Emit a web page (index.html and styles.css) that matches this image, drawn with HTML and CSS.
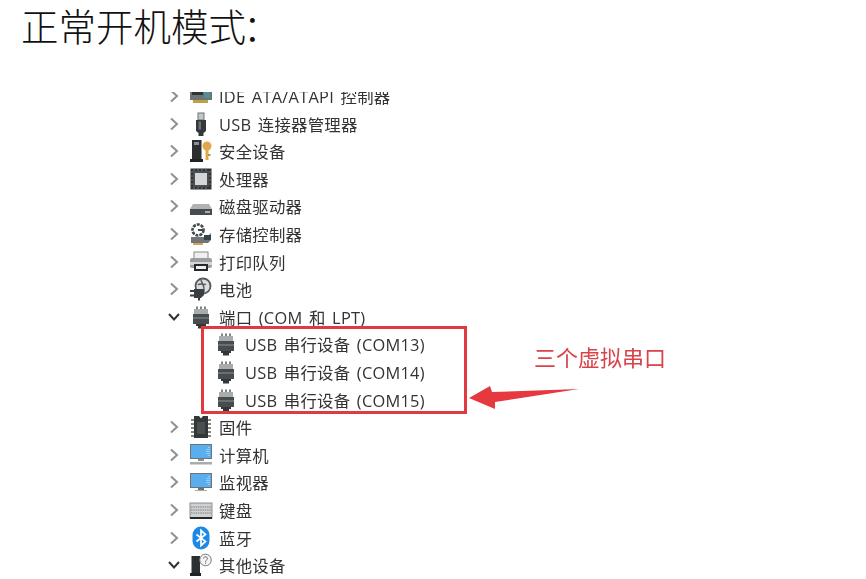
FILE: index.html
```html
<!DOCTYPE html>
<html lang="zh-CN">
<head>
<meta charset="utf-8">
<title>正常开机模式</title>
<link rel="stylesheet" href="styles.css">
</head>
<body>
<svg class="defs" width="0" height="0" aria-hidden="true">
  <symbol id="chev-r" viewBox="0 0 10 14"><path d="M2 1.500 8 7l-6 5.500" fill="none" stroke="#8f8f8f" stroke-width="2"/></symbol>
  <symbol id="chev-d" viewBox="0 0 14 10"><path d="M2 2 7 7.500 12 2" fill="none" stroke="#333" stroke-width="2"/></symbol>
  <symbol id="i-ide" viewBox="0 0 24 24"><rect x="1" y="2" width="22" height="14" fill="#6f7376"/><rect x="3" y="4" width="11" height="7" fill="#2f3437"/><rect x="15" y="5" width="6" height="9" fill="#4f8f96"/><rect x="4" y="16" width="15" height="3" fill="#b8a24a"/></symbol>
  <symbol id="i-usb" viewBox="0 0 24 24"><rect x="9" y="1" width="6" height="7" fill="#c4c6c8" stroke="#6d7072"/><path d="M7 8h10v11l-2.500 2v3h-5v-3L7 19z" fill="#34383b"/><rect x="9.500" y="9.500" width="2.500" height="8" fill="#6b7073"/></symbol>
  <symbol id="i-sec" viewBox="0 0 24 24"><rect x="3" y="1" width="9.500" height="19" fill="#2b2f32"/><rect x="5" y="3" width="5" height="3" fill="#8b8f93"/><rect x="1" y="20" width="13" height="3" fill="#222"/><circle cx="18" cy="7" r="4.500" fill="#dfa94a"/><rect x="16.500" y="10" width="3" height="11" fill="#dfa94a"/><rect x="19" y="15" width="2.500" height="2" fill="#c98f30"/></symbol>
  <symbol id="i-cpu" viewBox="0 0 24 24"><rect x="1.500" y="1.500" width="21" height="21" fill="#2f3336"/><path d="M1.500 5h21M1.500 9h21M1.500 13h21M1.500 17h21M5 1.500v21M9 1.500v21M13 1.500v21M17 1.500v21" stroke="#85898b" stroke-width=".8"/><rect x="4" y="4" width="16" height="16" fill="#4a4e51"/><rect x="6" y="6" width="12" height="12" fill="#d4d6d7"/></symbol>
  <symbol id="i-disk" viewBox="0 0 24 24"><path d="M4 10h16l3 5v5H1v-5z" fill="#b0b2b4"/><rect x="1" y="15" width="22" height="6" fill="#484c4f"/><rect x="16" y="17" width="5" height="2" fill="#a9adaf"/></symbol>
  <symbol id="i-sto" viewBox="0 0 24 24"><circle cx="9" cy="8" r="5.500" fill="none" stroke="#44494c" stroke-width="2.600" stroke-dasharray="3 1"/><path d="M9 8h5" stroke="#44494c" stroke-width="2"/><path d="M2 15h16l4-4v7l-3 3H2z" fill="#6f7578"/><rect x="15" y="13" width="7" height="5" fill="#34444d"/><rect x="4" y="21" width="10" height="2" fill="#d8a24a"/></symbol>
  <symbol id="i-pri" viewBox="0 0 24 24"><rect x="5" y="2" width="14" height="7" fill="#f0f0f0" stroke="#8a8a8a"/><rect x="1" y="8" width="22" height="10" rx="2" fill="#9a9ea0"/><rect x="1" y="12" width="22" height="3" fill="#d4d6d7"/><rect x="5" y="14" width="14" height="7" fill="#26292c"/><rect x="7" y="16" width="10" height="3" fill="#eee"/></symbol>
  <symbol id="i-bat" viewBox="0 0 24 24"><circle cx="14" cy="9" r="7.500" fill="#dcdddf" stroke="#55595c" stroke-width="1.800"/><path d="M9 8c3-3 5 1 8-1M12 3c1 4 4 5 3 12" stroke="#55595c" stroke-width="1.500" fill="none"/><path d="M5 12h10v6l-3 3H5z" fill="#3a3e41"/><path d="M1 14h4M1 18.500h4M10 21v2.500" stroke="#3a3e41" stroke-width="2"/></symbol>
  <symbol id="i-port" viewBox="0 0 24 24"><path d="M7 1.500h2v3H7zM11 1.500h2v3h-2zM15 1.500h2v3h-2z" fill="#7f8385"/><rect x="5" y="4" width="14" height="5" fill="#a9acae"/><rect x="4" y="9" width="16" height="10" fill="#474c4f"/><path d="M4 13h16" stroke="#8c9092"/><path d="M7 19h10v2h-2v2.500H9V21H7z" fill="#33373a"/></symbol>
  <symbol id="i-fw" viewBox="0 0 24 24"><path d="M5 1h5l2 2.500L14 1h5v22H5z" fill="#33373a"/><path d="M2 5h3M2 9h3M2 13h3M2 17h3M2 21h3M19 5h3M19 9h3M19 13h3M19 17h3M19 21h3" stroke="#85887a" stroke-width="1.800"/><rect x="8" y="7" width="8" height="12" fill="#4a4e51"/></symbol>
  <symbol id="i-pc" viewBox="0 0 24 24"><rect x="1" y="1" width="22" height="15" fill="#6f7577"/><rect x="2" y="2" width="20" height="13" fill="#58aeee"/><path d="M20 4v9M18 6v6" stroke="#d8eefc" stroke-width="1" stroke-dasharray="1 1"/><rect x="9" y="16" width="6" height="2" fill="#8a9093"/><rect x="1" y="19" width="22" height="2.500" fill="#a9acae"/></symbol>
  <symbol id="i-mon" viewBox="0 0 24 24"><rect x="1" y="3" width="22" height="15" fill="#6f7577"/><rect x="2" y="4" width="20" height="13" fill="#58aeee"/><path d="M20 6v9M18 8v6" stroke="#d8eefc" stroke-width="1" stroke-dasharray="1 1"/><rect x="9" y="18" width="6" height="2" fill="#6f7577"/><rect x="6" y="20" width="12" height="1" fill="#a9acae"/></symbol>
  <symbol id="i-key" viewBox="0 0 24 24"><rect x="1" y="5" width="22" height="15" fill="#cfd1d2" stroke="#8a8d8f"/><path d="M2 9h20M2 12h20M2 15h20" stroke="#7d8082" stroke-dasharray="1.500 .8"/><rect x="1" y="19" width="22" height="2" fill="#26292c"/></symbol>
  <symbol id="i-bt" viewBox="0 0 24 24"><rect x="3.500" y="0.500" width="17" height="23" rx="8.500" fill="#1e88e5"/><path d="M7.500 8.500l9 7-4.500 4V4.500l4.500 4-9 7" fill="none" stroke="#fff" stroke-width="1.700"/></symbol>
  <symbol id="i-oth" viewBox="0 0 24 24"><rect x="2.500" y="3" width="8.500" height="17" fill="#2b2f32"/><rect x="1" y="20" width="11" height="3" fill="#222"/><circle cx="16.500" cy="7" r="5.800" fill="#f4f4f4" stroke="#777"/><path d="M14.500 5.500c0-2.200 4-2.200 4 0 0 1.500-2 1.500-2 3.200M16.500 9.500v1.200" fill="none" stroke="#666"/></symbol>
</svg>

<h1 class="title">正常开机模式<span class="colon">：</span></h1>

<main class="tree-view">
  <ul class="tree">
    <li class="row"><svg class="chev"><use href="#chev-r"/></svg><svg class="icon"><use href="#i-ide"/></svg><span class="label">IDE ATA/ATAPI 控制器</span></li>
    <li class="row"><svg class="chev"><use href="#chev-r"/></svg><svg class="icon"><use href="#i-usb"/></svg><span class="label">USB 连接器管理器</span></li>
    <li class="row"><svg class="chev"><use href="#chev-r"/></svg><svg class="icon"><use href="#i-sec"/></svg><span class="label">安全设备</span></li>
    <li class="row"><svg class="chev"><use href="#chev-r"/></svg><svg class="icon"><use href="#i-cpu"/></svg><span class="label">处理器</span></li>
    <li class="row"><svg class="chev"><use href="#chev-r"/></svg><svg class="icon"><use href="#i-disk"/></svg><span class="label">磁盘驱动器</span></li>
    <li class="row"><svg class="chev"><use href="#chev-r"/></svg><svg class="icon"><use href="#i-sto"/></svg><span class="label">存储控制器</span></li>
    <li class="row"><svg class="chev"><use href="#chev-r"/></svg><svg class="icon"><use href="#i-pri"/></svg><span class="label">打印队列</span></li>
    <li class="row"><svg class="chev"><use href="#chev-r"/></svg><svg class="icon"><use href="#i-bat"/></svg><span class="label">电池</span></li>
    <li class="row"><svg class="chev chev-open"><use href="#chev-d"/></svg><svg class="icon"><use href="#i-port"/></svg><span class="label">端口 (COM 和 LPT)</span></li>
    <li class="row child"><svg class="icon"><use href="#i-port"/></svg><span class="label">USB 串行设备 (COM13)</span></li>
    <li class="row child"><svg class="icon"><use href="#i-port"/></svg><span class="label">USB 串行设备 (COM14)</span></li>
    <li class="row child"><svg class="icon"><use href="#i-port"/></svg><span class="label">USB 串行设备 (COM15)</span></li>
    <li class="row"><svg class="chev"><use href="#chev-r"/></svg><svg class="icon"><use href="#i-fw"/></svg><span class="label">固件</span></li>
    <li class="row"><svg class="chev"><use href="#chev-r"/></svg><svg class="icon"><use href="#i-pc"/></svg><span class="label">计算机</span></li>
    <li class="row"><svg class="chev"><use href="#chev-r"/></svg><svg class="icon"><use href="#i-mon"/></svg><span class="label">监视器</span></li>
    <li class="row"><svg class="chev"><use href="#chev-r"/></svg><svg class="icon"><use href="#i-key"/></svg><span class="label">键盘</span></li>
    <li class="row"><svg class="chev"><use href="#chev-r"/></svg><svg class="icon"><use href="#i-bt"/></svg><span class="label">蓝牙</span></li>
    <li class="row"><svg class="chev chev-open"><use href="#chev-d"/></svg><svg class="icon"><use href="#i-oth"/></svg><span class="label">其他设备</span></li>
  </ul>
</main>

<div class="highlight"></div>
<div class="note">三个虚拟串口</div>
<svg class="arrow" viewBox="0 0 112 26" width="112" height="26" aria-hidden="true"><path d="M1 14 22 2 24 8 111 5 27 18 27 25z" fill="#e5383f"/></svg>
</body>
</html>
```

FILE: styles.css
```css
html, body {
  margin: 0;
  height: 579px;
  overflow: hidden;
  background: #fff;
}

body {
  position: relative;
  font-family: "Open Sans", "Noto Sans CJK SC", sans-serif;
}

.defs {
  position: absolute;
}

.title {
  box-sizing: border-box;
  height: 92px;
  margin: 0;
  padding: 3px 0 0 21px;
  font-family: "Liberation Serif", "Noto Sans CJK SC", serif;
  font-size: 37.5px;
  font-weight: 300;
  line-height: 52px;
  color: #111;
}

.colon {
  margin-left: -3px;
}

.tree-view {
  height: 487px;
  overflow: hidden;
  filter: blur(0.5px);
}

.tree {
  list-style: none;
  margin: -9.8px 0 0;
  padding: 0 0 0 167px;
}

.row {
  display: flex;
  align-items: center;
  height: 27.6px;
  font-size: 16.4px;
  letter-spacing: 0.25px;
  word-spacing: 2px;
  color: #333;
  white-space: nowrap;
}

.chev {
  flex: none;
  width: 10px;
  height: 14px;
  margin: 0 10px 0 2px;
}

.chev-open {
  width: 14px;
  height: 10px;
  margin: 0 8px 0 0;
}

.icon {
  flex: none;
  width: 24px;
  height: 24px;
  margin-right: 6px;
}

.child {
  padding-left: 47px;
}

.child .icon {
  margin-right: 7px;
}

.highlight {
  position: absolute;
  left: 201px;
  top: 326px;
  width: 260px;
  height: 82px;
  border: 3px solid #e0393f;
}

.note {
  position: absolute;
  left: 534px;
  top: 340px;
  font-family: "Noto Sans CJK SC", sans-serif;
  font-size: 22px;
  line-height: 32px;
  color: #d9434a;
  filter: blur(0.4px);
}

.arrow {
  position: absolute;
  left: 468px;
  top: 384px;
}
```
